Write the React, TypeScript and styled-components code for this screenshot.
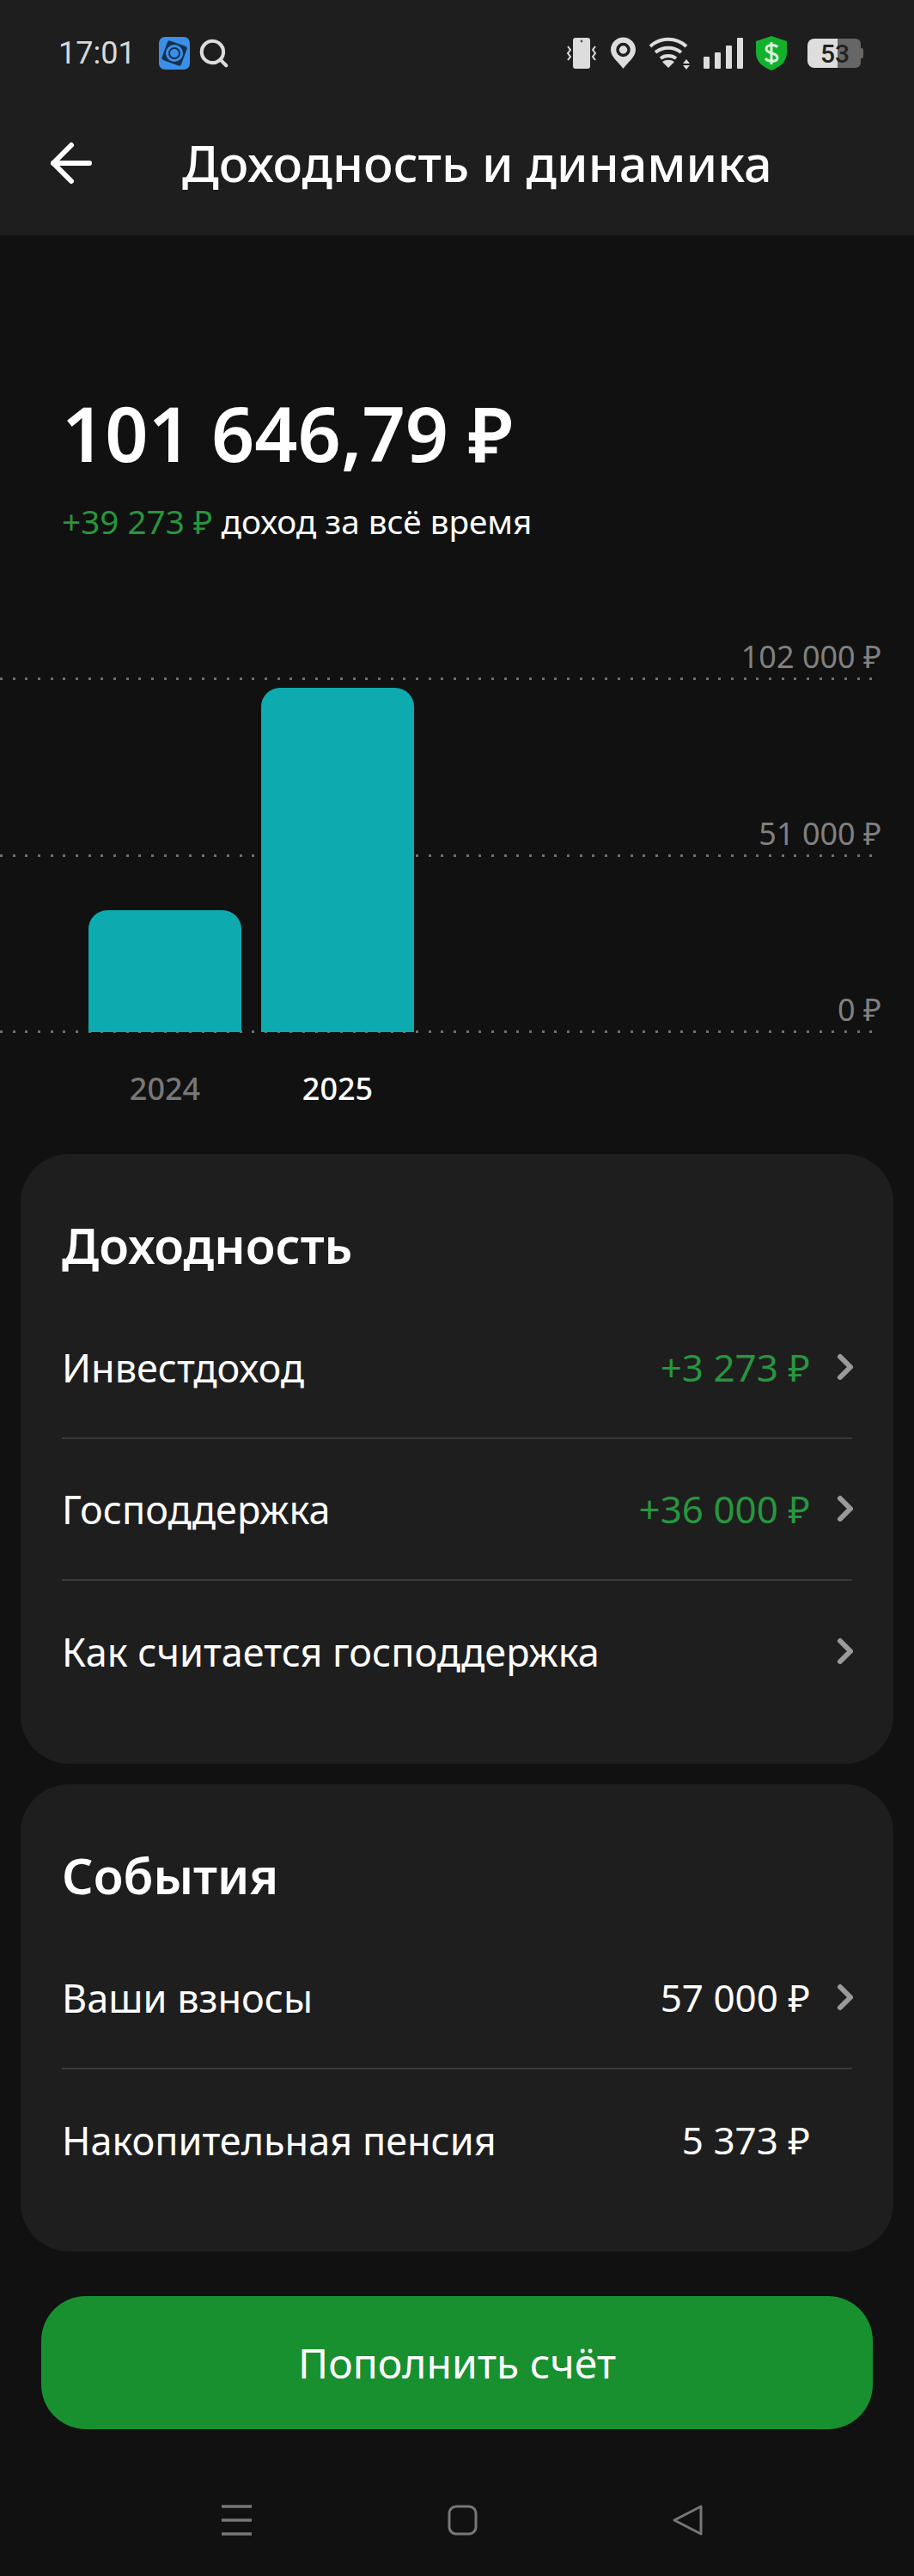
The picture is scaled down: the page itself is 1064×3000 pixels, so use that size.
import React from 'react';
import styled, { createGlobalStyle } from 'styled-components';
import { ArrowLeft, ChevronRight, Search } from 'lucide-react';

const GlobalStyle = createGlobalStyle`
  html, body {
    margin: 0;
    padding: 0;
    background: #111111;
  }
  * {
    box-sizing: border-box;
  }
`;

const Page = styled.div`
  width: 1064px;
  height: 3000px;
  background: #111111;
  color: #fff;
  font-family: 'Noto Sans', 'DejaVu Sans', sans-serif;
  display: flex;
  flex-direction: column;
  overflow: hidden;
`;

const Header = styled.header`
  height: 274px;
  background: #1e1e1f;
  flex-shrink: 0;
`;

const StatusBar = styled.div`
  height: 124px;
  padding: 0 59px 0 68px;
  display: flex;
  align-items: center;
  justify-content: space-between;
`;

const StatusGroup = styled.div`
  display: flex;
  align-items: center;
  gap: 14px;
`;

const StatusLeft = styled.div`
  display: flex;
  align-items: center;
`;

const Clock = styled.span`
  font-family: Roboto, sans-serif;
  font-size: 36px;
  color: #d8d8d8;
  margin-right: 27px;
`;

const AppIconSvg = styled.svg`
  margin-right: 9px;
`;

const BatterySvg = styled.svg`
  margin-left: 8px;
`;

const TitleRow = styled.div`
  display: flex;
  align-items: center;
  padding-left: 47px;
  height: 132px;
`;

const BackButton = styled.div`
  width: 165px;
  display: flex;
  color: #fff;
`;

const Title = styled.h1`
  margin: 0;
  font-size: 57.5px;
  font-weight: 500;
`;

const Summary = styled.section`
  padding: 175px 72px 0;
  height: 418px;
`;

const Total = styled.div`
  font-size: 88px;
  font-weight: 600;
  line-height: 110px;
`;

const Income = styled.div`
  font-size: 38.7px;
  margin-top: 22px;
  line-height: 52px;
`;

const Green = styled.span`
  color: #27963e;
`;

const Chart = styled.section`
  position: relative;
  height: 652px;
`;

const GridRow = styled.div<{ $height: number }>`
  height: ${(p) => p.$height}px;
  margin-right: 46px;
  display: flex;
  justify-content: flex-end;
  align-items: flex-end;
  background: repeating-linear-gradient(to right, #6e6e6e 0 3px, transparent 3px 14.67px) left bottom / 100% 3px no-repeat;
`;

const GridLabel = styled.span`
  font-size: 36px;
  color: #808080;
  line-height: 46px;
  margin: 0 -8px 4px 0;
`;

const BarLayer = styled.div`
  position: absolute;
  left: 103px;
  top: 108px;
  height: 402px;
  display: flex;
  align-items: flex-end;
  gap: 23px;
`;

const Bar = styled.div<{ $height: number }>`
  width: 178px;
  height: ${(p) => p.$height}px;
  background: #0dabb0;
  border-radius: 22px 22px 0 0;
`;

const YearRow = styled.div`
  position: absolute;
  left: 103px;
  top: 551px;
  display: flex;
  gap: 23px;
`;

const Year = styled.span<{ $active?: boolean }>`
  width: 178px;
  text-align: center;
  font-size: 36px;
  font-weight: 500;
  color: ${(p) => (p.$active ? '#fff' : '#777')};
`;

const Card = styled.section<{ $height: number }>`
  height: ${(p) => p.$height}px;
  margin: 0 24px 24px;
  padding: 74px 48px 0;
  background: #1e1e1f;
  border-radius: 56px;
`;

const CardTitle = styled.h2`
  margin: 0 0 29px;
  font-size: 57px;
  font-weight: 600;
  line-height: 64px;
`;

const Row = styled.div<{ $last?: boolean }>`
  height: 166px;
  display: flex;
  align-items: center;
  justify-content: space-between;
  margin-top: -1px;
  border-bottom: ${(p) => (p.$last ? 'none' : '2px solid #3a3a3b')};
`;

const RowLabel = styled.span`
  font-size: 45px;
`;

const RowRight = styled.div`
  display: flex;
  align-items: center;
`;

const RowValue = styled.span<{ $positive?: boolean }>`
  font-size: 44px;
  color: ${(p) => (p.$positive ? '#27963e' : '#fff')};
`;

const ChevronSlot = styled.div`
  width: 48px;
  margin-left: 17px;
  margin-right: -16px;
  display: flex;
  color: #9a9a9a;
`;

const TopUp = styled.button`
  height: 155px;
  margin: 28px 48px 0;
  border: none;
  border-radius: 52px;
  background: #18902f;
  color: #fff;
  font-family: inherit;
  font-size: 48px;
  flex-shrink: 0;
`;

const NavBar = styled.nav`
  height: 106px;
  margin-top: 53px;
  padding: 0 246px 0 258px;
  display: flex;
  align-items: center;
  justify-content: space-between;
`;

const StatusIcons = () => (
  <StatusGroup>
    <svg width="38" height="38" viewBox="0 0 38 38">
      <rect x="9" y="1" width="20" height="36" rx="3" fill="#ddd" />
      <circle cx="19" cy="5" r="1.4" fill="#555" />
      <path d="M3 11l3 4-3 4 3 4-3 4M35 11l-3 4 3 4-3 4 3 4" fill="none" stroke="#ddd" strokeWidth="2" />
    </svg>
    <svg width="31" height="38" viewBox="0 0 31 38">
      <path d="M15.5 37C11 30 1 24 1 15a14.500 14.500 0 0 1 29 0c0 9-10 15-14.500 22z" fill="#ddd" />
      <circle cx="15.500" cy="15" r="6.500" fill="none" stroke="#1e1e1f" strokeWidth="3.500" />
    </svg>
    <svg width="50" height="38" viewBox="0 0 50 38">
      <path d="M2 11c12-11 30-11 42 0M8 18c9-7 21-7 30 0M14 25c5-4 13-4 18 0" fill="none" stroke="#ddd" strokeWidth="4" />
      <path d="M23 36l-7-7c4-3 10-3 14 0zM44 26l4 5h-8zM44 38l4-5h-8z" fill="#ddd" />
    </svg>
    <svg width="46" height="36" viewBox="0 0 46 36">
      <rect x="0" y="22" width="7" height="14" rx="1" fill="#ddd" />
      <rect x="13" y="17" width="7" height="19" rx="1" fill="#ddd" />
      <rect x="26" y="9" width="7" height="27" rx="1" fill="#ddd" />
      <rect x="39" y="0" width="7" height="36" rx="1" fill="#ddd" />
    </svg>
    <svg width="38" height="42" viewBox="0 0 38 42">
      <path d="M19 1l18 6v13c0 11-8 17-18 21C9 37 1 31 1 20V7z" fill="#12b02d" />
      <path d="M26 14c-2-3-13-4-13 2s13 4 13 10-11 5-14 1M19 8v26" fill="none" stroke="#d8f5dc" strokeWidth="3" />
    </svg>
    <BatterySvg width="66" height="34" viewBox="0 0 66 34">
      <path d="M9 0h27v34H9a8 8 0 0 1-8-8V8a8 8 0 0 1 8-8z" fill="#ddd" />
      <path d="M36 0h21a6 6 0 0 1 6 6v22a6 6 0 0 1-6 6H36z" fill="#666" />
      <rect x="62" y="11" width="4" height="12" rx="2" fill="#666" />
      <text x="33" y="28" textAnchor="middle" fontFamily="Roboto, sans-serif" fontSize="30" fontWeight="500" fill="#222">53</text>
    </BatterySvg>
  </StatusGroup>
);

const AppIcon = () => (
  <AppIconSvg width="36" height="38" viewBox="0 0 36 38">
    <rect width="36" height="38" rx="7" fill="#3b8fe8" />
    <rect x="6" y="7" width="24" height="24" rx="3" fill="#14304f" transform="rotate(20 18 19)" />
    <circle cx="18" cy="19" r="10" fill="#3b8fe8" />
    <circle cx="18" cy="19" r="7" fill="#14304f" />
    <circle cx="18" cy="19" r="5" fill="#3b8fe8" />
  </AppIconSvg>
);

const Chevron = () => <ChevronRight size={48} strokeWidth={3} />;

export default function App() {
  return (
    <Page>
      <GlobalStyle />
      <Header>
        <StatusBar>
          <StatusLeft>
            <Clock>17:01</Clock>
            <AppIcon />
            <Search size={38} strokeWidth={2.6} color="#ddd" />
          </StatusLeft>
          <StatusIcons />
        </StatusBar>
        <TitleRow>
          <BackButton>
            <ArrowLeft size={72} strokeWidth={2} />
          </BackButton>
          <Title>Доходность и динамика</Title>
        </TitleRow>
      </Header>

      <Summary>
        <Total>101 646,79 ₽</Total>
        <Income>
          <Green>+39 273 ₽</Green> доход за всё время
        </Income>
      </Summary>

      <Chart>
        <GridRow $height={100}>
          <GridLabel>102 000 ₽</GridLabel>
        </GridRow>
        <GridRow $height={206}>
          <GridLabel>51 000 ₽</GridLabel>
        </GridRow>
        <GridRow $height={205}>
          <GridLabel>0 ₽</GridLabel>
        </GridRow>
        <BarLayer>
          <Bar $height={142} />
          <Bar $height={401} />
        </BarLayer>
        <YearRow>
          <Year>2024</Year>
          <Year $active>2025</Year>
        </YearRow>
      </Chart>

      <Card $height={710}>
        <CardTitle>Доходность</CardTitle>
        <Row>
          <RowLabel>Инвестдоход</RowLabel>
          <RowRight>
            <RowValue $positive>+3 273 ₽</RowValue>
            <ChevronSlot><Chevron /></ChevronSlot>
          </RowRight>
        </Row>
        <Row>
          <RowLabel>Господдержка</RowLabel>
          <RowRight>
            <RowValue $positive>+36 000 ₽</RowValue>
            <ChevronSlot><Chevron /></ChevronSlot>
          </RowRight>
        </Row>
        <Row $last>
          <RowLabel>Как считается господдержка</RowLabel>
          <RowRight>
            <ChevronSlot><Chevron /></ChevronSlot>
          </RowRight>
        </Row>
      </Card>

      <Card $height={544}>
        <CardTitle>События</CardTitle>
        <Row>
          <RowLabel>Ваши взносы</RowLabel>
          <RowRight>
            <RowValue>57 000 ₽</RowValue>
            <ChevronSlot><Chevron /></ChevronSlot>
          </RowRight>
        </Row>
        <Row $last>
          <RowLabel>Накопительная пенсия</RowLabel>
          <RowRight>
            <RowValue>5 373 ₽</RowValue>
            <ChevronSlot />
          </RowRight>
        </Row>
      </Card>

      <TopUp>Пополнить счёт</TopUp>

      <NavBar>
        <svg width="35" height="36" viewBox="0 0 35 36">
          <path d="M0 2h35M0 18h35M0 34h35" stroke="#777" strokeWidth="3.5" fill="none" />
        </svg>
        <svg width="35" height="36" viewBox="0 0 35 36">
          <rect x="2" y="2" width="31" height="32" rx="8" fill="none" stroke="#777" strokeWidth="3" />
        </svg>
        <svg width="35" height="36" viewBox="0 0 35 36">
          <path d="M33 2v32L2 18z" fill="none" stroke="#777" strokeWidth="3" strokeLinejoin="round" />
        </svg>
      </NavBar>
    </Page>
  );
}
